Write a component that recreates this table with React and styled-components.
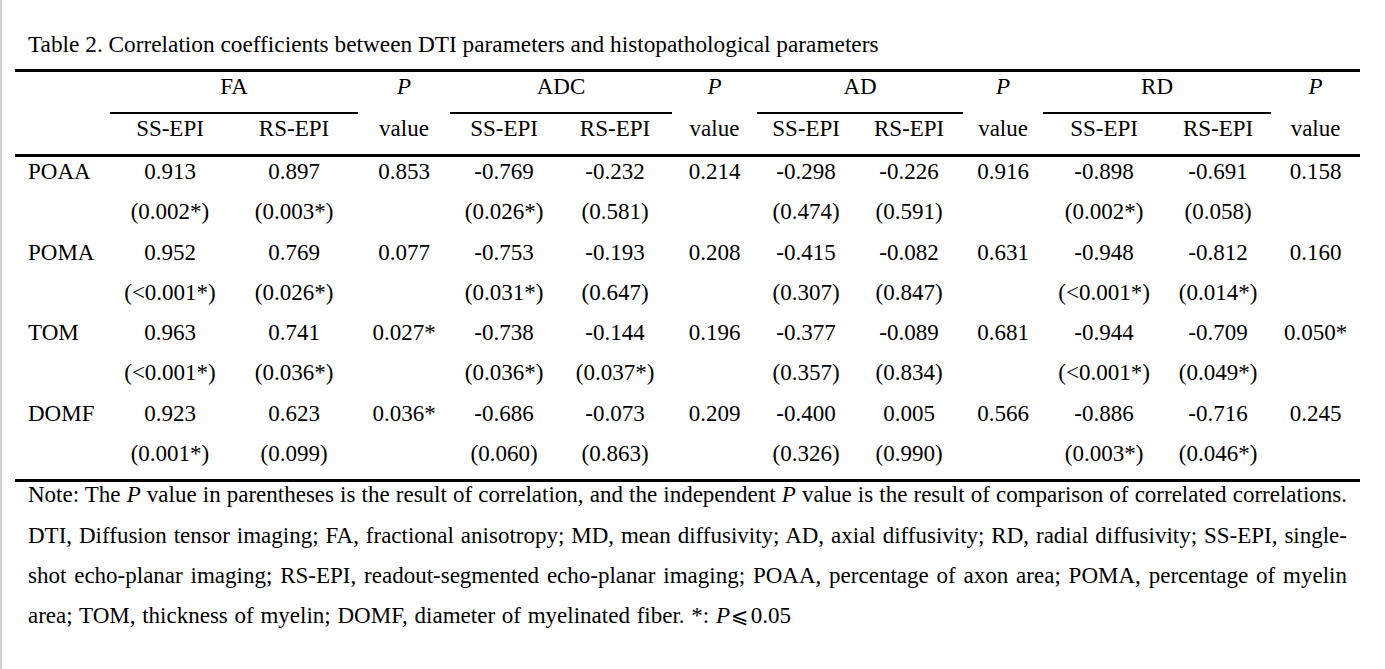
import React from "react";
import styled, { createGlobalStyle } from "styled-components";

const Global = createGlobalStyle`
  html, body { margin: 0; padding: 0; background: #fff; }
  body { font-family: "Liberation Serif", "Times New Roman", serif; color: #000; }
`;

const Page = styled.div`
  box-sizing: border-box;
  min-height: 669px;
  border-left: 2px solid #d2d2d2;
  padding: 30px 25px 0 13px;
  font-size: 23px;
`;

const Title = styled.div`
  font-size: 23.3px;
  line-height: 28px;
  padding-left: 13px;
  margin-bottom: 11px;
  white-space: nowrap;
`;

const Table = styled.table`
  width: 1345px;
  table-layout: fixed;
  border-collapse: separate;
  border-spacing: 0;
  font-size: 23px;
`;

const Col = styled.col`
  width: ${(p) => p.$w}px;
`;

const HeadCell = styled.th`
  font-weight: normal;
  text-align: center;
  vertical-align: top;
  padding: 1px 0 11px;
  line-height: 28px;
  white-space: nowrap;
  font-style: ${(p) => (p.$italic ? "italic" : "normal")};
  border-top: ${(p) => (p.$top ? "3px solid #000" : "none")};
  border-bottom: ${(p) =>
    p.$rule === "thick" ? "3px solid #000" : p.$rule === "thin" ? "2px solid #000" : "none"};
`;

const Cell = styled.td`
  text-align: ${(p) => (p.$label ? "left" : "center")};
  padding: 1px 0 11.3px ${(p) => (p.$label ? "13px" : "0")};
  vertical-align: top;
  line-height: 28px;
  white-space: nowrap;
  border-bottom: ${(p) => (p.$last ? "3px solid #000" : "none")};
`;

const Note = styled.div`
  padding: 0 13px;
  width: 1345px;
  box-sizing: border-box;
  font-size: 23px;
`;

const NoteLine = styled.div`
  line-height: 26px;
  margin-bottom: 14.3px;
  white-space: nowrap;
  text-align: ${(p) => (p.$justify ? "justify" : "left")};
  text-align-last: ${(p) => (p.$justify ? "justify" : "left")};
  word-spacing: ${(p) => (p.$justify ? "0" : "1px")};
`;

const Sym = styled.span`
  font-family: "DejaVu Serif", "DejaVu Sans", "Noto Sans CJK SC", serif;
  font-size: 21px;
  font-style: normal;
  margin: 0 2px 0 1px;
`;

const widths = [95, 120, 128, 92, 108, 114, 85, 98, 108, 80, 122, 106, 89];
const groups = ["FA", "ADC", "AD", "RD"];

const rows = [
  {
    name: "POAA",
    r: ["0.913", "0.897", "0.853", "-0.769", "-0.232", "0.214", "-0.298", "-0.226", "0.916", "-0.898", "-0.691", "0.158"],
    p: ["(0.002*)", "(0.003*)", "", "(0.026*)", "(0.581)", "", "(0.474)", "(0.591)", "", "(0.002*)", "(0.058)", ""],
  },
  {
    name: "POMA",
    r: ["0.952", "0.769", "0.077", "-0.753", "-0.193", "0.208", "-0.415", "-0.082", "0.631", "-0.948", "-0.812", "0.160"],
    p: ["(<0.001*)", "(0.026*)", "", "(0.031*)", "(0.647)", "", "(0.307)", "(0.847)", "", "(<0.001*)", "(0.014*)", ""],
  },
  {
    name: "TOM",
    r: ["0.963", "0.741", "0.027*", "-0.738", "-0.144", "0.196", "-0.377", "-0.089", "0.681", "-0.944", "-0.709", "0.050*"],
    p: ["(<0.001*)", "(0.036*)", "", "(0.036*)", "(0.037*)", "", "(0.357)", "(0.834)", "", "(<0.001*)", "(0.049*)", ""],
  },
  {
    name: "DOMF",
    r: ["0.923", "0.623", "0.036*", "-0.686", "-0.073", "0.209", "-0.400", "0.005", "0.566", "-0.886", "-0.716", "0.245"],
    p: ["(0.001*)", "(0.099)", "", "(0.060)", "(0.863)", "", "(0.326)", "(0.990)", "", "(0.003*)", "(0.046*)", ""],
  },
];

export default function App() {
  return (
    <Page>
      <Global />
      <Title>Table 2. Correlation coefficients between DTI parameters and histopathological parameters</Title>
      <Table>
        <colgroup>
          {widths.map((w, i) => (
            <Col key={i} $w={w} />
          ))}
        </colgroup>
        <thead>
          <tr>
            <HeadCell $top />
            {groups.map((g) => (
              <React.Fragment key={g}>
                <HeadCell $top colSpan={2} $rule="thin">
                  {g}
                </HeadCell>
                <HeadCell $top $italic>
                  P
                </HeadCell>
              </React.Fragment>
            ))}
          </tr>
          <tr>
            <HeadCell $rule="thick" />
            {groups.map((g) => (
              <React.Fragment key={g}>
                <HeadCell $rule="thick">SS-EPI</HeadCell>
                <HeadCell $rule="thick">RS-EPI</HeadCell>
                <HeadCell $rule="thick">value</HeadCell>
              </React.Fragment>
            ))}
          </tr>
        </thead>
        <tbody>
          {rows.map((row, ri) => {
            const last = ri === rows.length - 1;
            return (
              <React.Fragment key={row.name}>
                <tr>
                  <Cell $label>{row.name}</Cell>
                  {row.r.map((v, i) => (
                    <Cell key={i}>{v}</Cell>
                  ))}
                </tr>
                <tr>
                  <Cell $label $last={last} />
                  {row.p.map((v, i) => (
                    <Cell key={i} $last={last}>
                      {v}
                    </Cell>
                  ))}
                </tr>
              </React.Fragment>
            );
          })}
        </tbody>
      </Table>
      <Note>
        <NoteLine $justify>
          Note: The <i>P</i> value in parentheses is the result of correlation, and the independent <i>P</i> value is the result of comparison of correlated correlations.
        </NoteLine>
        <NoteLine $justify>
          DTI, Diffusion tensor imaging; FA, fractional anisotropy; MD, mean diffusivity; AD, axial diffusivity; RD, radial diffusivity; SS-EPI, single-
        </NoteLine>
        <NoteLine $justify>
          shot echo-planar imaging; RS-EPI, readout-segmented echo-planar imaging; POAA, percentage of axon area; POMA, percentage of myelin
        </NoteLine>
        <NoteLine>
          area; TOM, thickness of myelin; DOMF, diameter of myelinated fiber. *: <i>P</i>
          <Sym>⩽</Sym>0.05
        </NoteLine>
      </Note>
    </Page>
  );
}
